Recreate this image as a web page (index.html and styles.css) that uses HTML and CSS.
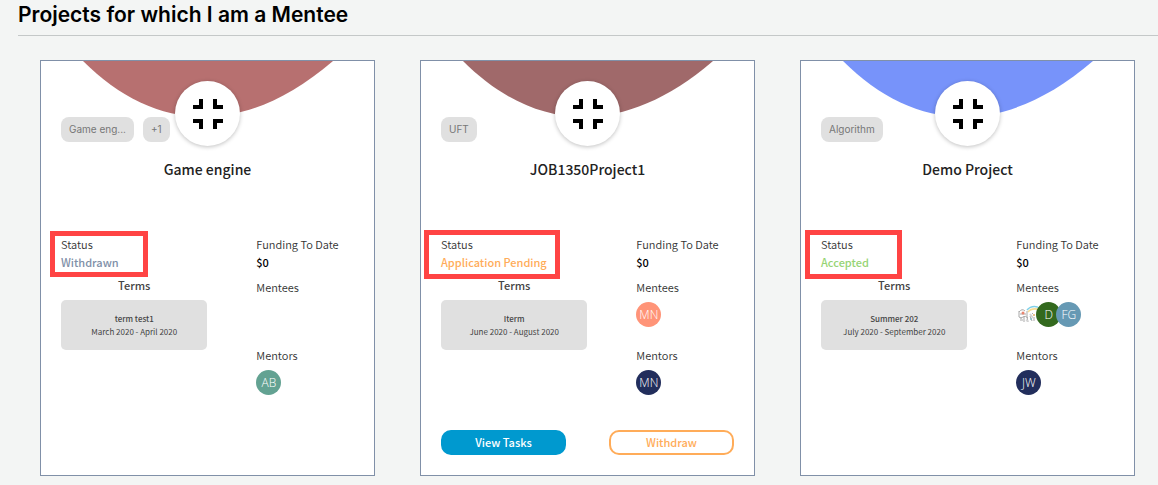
FILE: index.html
```html
<!DOCTYPE html>
<html lang="en">
<head>
<meta charset="utf-8">
<meta name="viewport" content="width=device-width, initial-scale=1">
<title>Projects for which I am a Mentee</title>
<link rel="stylesheet" href="styles.css">
</head>
<body>
<svg class="defs" aria-hidden="true">
  <symbol id="arc" viewBox="0 0 333 60"><path d="M42 0C112 70 200 79 292 0Z"/></symbol>
  <symbol id="collapse" viewBox="0 0 30 30"><path d="M6 0h4v10H0V6h6zM20 0h4v6h6v4H20zM0 20h10v10H6v-6H0zM20 20h10v4h-6v6h-4z"/></symbol>
</svg>
<main class="page">
  <h1 class="page-title">Projects for which I am a Mentee</h1>
  <div class="cards">

    <article class="card">
      <svg class="arc arc-rose" aria-hidden="true"><use href="#arc"/></svg>
      <header class="hero">
        <div class="chips"><span class="chip">Game eng...</span><span class="chip">+1</span></div>
        <div class="logo"><svg class="logo-icon" aria-hidden="true"><use href="#collapse"/></svg></div>
      </header>
      <h2 class="card-title">Game engine</h2>
      <div class="details">
        <div class="col">
          <div class="status">
            <div class="label">Status</div>
            <div class="value withdrawn">Withdrawn</div>
            <span class="marker marker-small"></span>
          </div>
          <div class="terms">
            <h3 class="terms-title">Terms</h3>
            <div class="term"><strong class="term-name">term test1</strong><span>March 2020 - April 2020</span></div>
          </div>
        </div>
        <div class="col">
          <div class="label">Funding To Date</div>
          <div class="value">$0</div>
          <div class="people">
            <div class="label">Mentees</div>
            <div class="avatars"></div>
            <div class="label">Mentors</div>
            <div class="avatars"><span class="avatar teal">AB</span></div>
          </div>
        </div>
      </div>
    </article>

    <article class="card">
      <svg class="arc arc-brown" aria-hidden="true"><use href="#arc"/></svg>
      <header class="hero">
        <div class="chips"><span class="chip">UFT</span></div>
        <div class="logo"><svg class="logo-icon" aria-hidden="true"><use href="#collapse"/></svg></div>
      </header>
      <h2 class="card-title">JOB1350Project1</h2>
      <div class="details">
        <div class="col">
          <div class="status">
            <div class="label">Status</div>
            <div class="value pending">Application Pending</div>
            <span class="marker marker-wide"></span>
          </div>
          <div class="terms">
            <h3 class="terms-title">Terms</h3>
            <div class="term"><strong class="term-name">Iterm</strong><span>June 2020 - August 2020</span></div>
          </div>
        </div>
        <div class="col">
          <div class="label">Funding To Date</div>
          <div class="value">$0</div>
          <div class="people">
            <div class="label">Mentees</div>
            <div class="avatars"><span class="avatar coral">MN</span></div>
            <div class="label">Mentors</div>
            <div class="avatars"><span class="avatar navy">MN</span></div>
          </div>
        </div>
      </div>
      <footer class="actions">
        <button class="btn btn-primary" type="button">View Tasks</button>
        <button class="btn btn-outline" type="button">Withdraw</button>
      </footer>
    </article>

    <article class="card">
      <svg class="arc arc-blue" aria-hidden="true"><use href="#arc"/></svg>
      <header class="hero">
        <div class="chips"><span class="chip">Algorithm</span></div>
        <div class="logo"><svg class="logo-icon" aria-hidden="true"><use href="#collapse"/></svg></div>
      </header>
      <h2 class="card-title">Demo Project</h2>
      <div class="details">
        <div class="col">
          <div class="status">
            <div class="label">Status</div>
            <div class="value accepted">Accepted</div>
            <span class="marker marker-medium"></span>
          </div>
          <div class="terms">
            <h3 class="terms-title">Terms</h3>
            <div class="term"><strong class="term-name">Summer 202</strong><span>July 2020 - September 2020</span></div>
          </div>
        </div>
        <div class="col">
          <div class="label">Funding To Date</div>
          <div class="value">$0</div>
          <div class="people">
            <div class="label">Mentees</div>
            <div class="avatars">
              <svg class="avatar" viewBox="0 0 25 25" aria-hidden="true">
                <g fill="none">
                  <path d="M11 8Q16 2 25 6" stroke="#7fd0e8" stroke-width="1.5"/>
                  <path d="M12 10Q16 5 25 8" stroke="#f6dc93" stroke-width="1.5"/>
                  <path d="M3 10q3-4 6-1M3 9v6q2 2 4 0t5 1M5 15v4M8 14v6M11 9v6l1 5M14 14l2 5M16 11l3 3M18 15v4" stroke="#a9a9a9"/>
                  <path d="M4 12h7M6 18h3M10 18l2 1M14 12l3 4" stroke="#d5d5d5" stroke-width="2"/>
                </g>
                <circle cx="7" cy="11" r="1.5" fill="#e9856f"/>
                <circle cx="15" cy="17" r="1" fill="#89bfc8"/>
                <path d="M17 12h2v2h-2z" fill="#eac18b"/>
              </svg>
              <span class="avatar green">D</span>
              <span class="avatar steel">FG</span>
            </div>
            <div class="label">Mentors</div>
            <div class="avatars"><span class="avatar navy">JW</span></div>
          </div>
        </div>
      </div>
    </article>

  </div>
</main>
</body>
</html>
```
FILE: styles.css
```css
* { box-sizing: border-box; }

body {
  margin: 0;
  background: #f3f5f4;
  color: #333;
  font: 11px/18px "Noto Sans CJK SC", "Noto Sans", sans-serif;
}

.defs { position: absolute; width: 0; height: 0; }

.page-title {
  margin: 0 0 0 18px;
  padding-bottom: 5px;
  border-bottom: 1px solid #c4c8c8;
  color: #000;
  font: 600 21px/30px Inter, sans-serif;
}

.cards {
  display: grid;
  grid-template-columns: repeat(auto-fit, minmax(300px, 1fr));
  gap: 45px;
  padding: 24px 23px 9px 40px;
}

.card {
  position: relative;
  padding: 20px;
  background: #fff;
  border: 1px solid #8090a8;
}

.arc { position: absolute; top: 0; left: 0; width: 100%; height: 60px; }
.arc-rose { fill: #b77070; }
.arc-brown { fill: #a0696a; }
.arc-blue { fill: #7793fa; }

.hero {
  position: relative;
  display: grid;
  grid-template-columns: 1fr auto 1fr;
}

.chips { display: flex; align-items: flex-end; gap: 9px; padding-bottom: 4px; }

.chip {
  padding: 0 8px;
  border-radius: 8px;
  background: #e0e0e0;
  color: #777;
  font: 10px/25px Inter, sans-serif;
  white-space: nowrap;
}

.logo {
  display: grid;
  place-items: center;
  width: 65px;
  height: 65px;
  border-radius: 50%;
  background: #fff;
  box-shadow: 0 1px 4px rgba(0, 0, 0, .25);
}

.logo-icon { width: 30px; height: 30px; }

.card-title {
  margin: 11px 0 54px;
  color: #222;
  font-size: 14px;
  font-weight: 500;
  line-height: 24px;
  text-align: center;
}

.details { display: grid; grid-template-columns: 2fr 1fr; }
.label { font-weight: 350; white-space: nowrap; }
.value { color: #000; font-weight: 500; white-space: nowrap; }
.withdrawn { color: #8090a8; }
.pending { color: #ffac59; }
.accepted { color: #96d474; }

.status { position: relative; }
.marker { position: absolute; border: 5px solid #ff4444; }
.marker-small { top: -4px; left: -11px; width: 98px; height: 46px; }
.marker-wide { top: -5px; left: -17px; width: 136px; height: 49px; }
.marker-medium { top: -5px; left: -16px; width: 97px; height: 49px; }

.terms { width: 75%; margin-top: 5px; }

.terms-title {
  margin: 0 0 6px;
  color: #444;
  font-size: 11px;
  font-weight: 500;
  text-align: center;
}

.term {
  display: flex;
  flex-direction: column;
  padding: 12px 0;
  border-radius: 5px;
  background: #e0e0e0;
  color: #444;
  font-size: 8px;
  line-height: 13px;
  text-align: center;
}

.term-name { font-weight: 500; }

.people { margin-top: 7px; }
.avatars { display: flex; height: 25px; margin: 6px 0 19px; }
.avatars:last-child { margin-bottom: 0; }

.avatar {
  flex: none;
  width: 25px;
  height: 25px;
  border-radius: 50%;
  color: #fff;
  font: 300 12px/25px "Open Sans", sans-serif;
  text-align: center;
}

.avatar + .avatar { margin-left: -5px; }
.teal { background: #63a292; }
.coral { background: #ff9478; }
.navy { background: #222e5c; }
.green { background: #33691e; }
.steel { background: #6699b4; }

.actions { display: flex; justify-content: space-between; margin-top: 35px; }

.btn {
  width: 125px;
  height: 25px;
  padding: 0 0 2px;
  border: 2px solid #ffac59;
  border-radius: 10px;
  background: #fff;
  color: #ffac59;
  font: 500 11px/18px "Noto Sans CJK SC", sans-serif;
}

.btn-primary { border-color: #0099cf; background: #0099cf; color: #fff; }
```
